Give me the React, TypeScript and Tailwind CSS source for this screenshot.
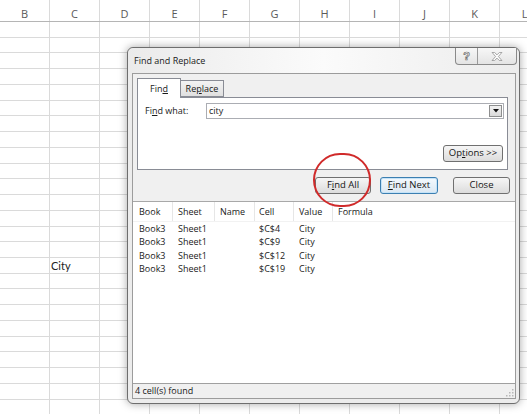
import React from 'react';

const COLS = ['B', 'C', 'D', 'E', 'F', 'G', 'H', 'I', 'J', 'K', 'L'];
const ROWS = Array.from({ length: 25 }, (_, i) => i);

const results = [
  { book: 'Book3', sheet: 'Sheet1', name: '', cell: '$C$4', value: 'City' },
  { book: 'Book3', sheet: 'Sheet1', name: '', cell: '$C$9', value: 'City' },
  { book: 'Book3', sheet: 'Sheet1', name: '', cell: '$C$12', value: 'City' },
  { book: 'Book3', sheet: 'Sheet1', name: '', cell: '$C$19', value: 'City' },
];

const listCols = [
  { key: 'book', label: 'Book', w: 'w-[40px] pl-[6px] border-r' },
  { key: 'sheet', label: 'Sheet', w: 'w-[42px] pl-[5px] border-r' },
  { key: 'name', label: 'Name', w: 'w-[40px] pl-[5px] border-r' },
  { key: 'cell', label: 'Cell', w: 'w-[39px] pl-[4px] border-r' },
  { key: 'value', label: 'Value', w: 'w-[39px] pl-[5px] border-r' },
  { key: 'formula', label: 'Formula', w: 'w-[60px] pl-[5px]' },
];

const btn =
  'h-[17px] rounded-[3px] border border-[#707070] bg-gradient-to-b from-[#f6f6f6] to-[#dcdcdc] text-[9.5px] text-[#151515] flex items-center justify-center';

function U({ children }: { children: React.ReactNode }) {
  return <span className="underline underline-offset-[1px] decoration-[0.5px]">{children}</span>;
}

export default function App() {
  return (
    <div className="relative w-[527px] h-[414px] overflow-hidden bg-white">
      {/* Sheet grid */}
      <div className="flex flex-col font-['Open_Sans',sans-serif]">
        <div className="flex h-[22px] border-b border-[#b5b5b5]">
          {COLS.map((c) => (
            <div
              key={c}
              className="w-[50px] shrink-0 border-r border-[#dadada] flex items-center justify-center pt-[5px] text-[11px] leading-none text-[#5a5a5a]"
            >
              {c}
            </div>
          ))}
        </div>
        {ROWS.map((r) => (
          <div key={r} className="flex h-[15.74px] shrink-0">
            {COLS.map((c, ci) => (
              <div
                key={c}
                className="w-[50px] shrink-0 border-r border-b border-[#dadada] flex items-center pl-[1px] text-[11px] leading-none text-[#222] font-['Lato',sans-serif]"
              >
                {r === 15 && ci === 1 ? 'City' : ''}
              </div>
            ))}
          </div>
        ))}
      </div>

      {/* Find and Replace dialog */}
      <div className="absolute left-[127px] top-[47px] w-[393px] h-[357px] rounded-[6px] border border-[#6e6e6e] bg-[#ececec] shadow-[0_0_8px_rgba(0,0,0,0.35)] flex flex-col font-['Open_Sans',sans-serif] text-[#1a1a1a]">
        {/* Title bar */}
        <div className="relative h-[25px] shrink-0 flex items-center pl-[6px] rounded-t-[6px] bg-gradient-to-r from-[#ebebeb] via-[#fbfbfb] to-[#ececec]">
          <span className="text-[9px]">Find and Replace</span>
          <div className="absolute right-[2px] top-0 flex h-[17px] rounded-b-[4px] border border-t-0 border-[#8a8a8a] bg-gradient-to-b from-[#f7f7f7] to-[#e4e4e4] overflow-hidden">
            <div className="w-[22px] border-r border-[#9a9a9a] flex items-center justify-center text-[11px] font-bold leading-none text-white font-['Liberation_Sans',sans-serif] [-webkit-text-stroke:0.7px_#6a6a6a]">
              ?
            </div>
            <div className="w-[38px] flex items-center justify-center">
              <svg width="12" height="9" viewBox="0 0 14 11">
                <polygon
                  points="1,0.5 4,0.5 7,3.5 10,0.5 13,0.5 8.7,5.5 13,10.5 10,10.5 7,7.5 4,10.5 1,10.5 5.3,5.5"
                  fill="#fff"
                  stroke="#7a7a7a"
                  strokeWidth="0.8"
                />
              </svg>
            </div>
          </div>
        </div>

        {/* Client area */}
        <div className="flex-1 ml-[4px] mr-[3px] mb-[4px] border border-[#9c9c9c] bg-[#f0f0f0] flex flex-col">
          {/* Tabs */}
          <div className="pt-[4px] pl-[4px] pr-[7px]">
            <div className="flex h-[19px] items-end relative z-10">
              <div className="w-[44px] h-[20px] -mb-px bg-white border border-b-0 border-[#898c95] flex items-center justify-center text-[9px]">
                Fin<U>d</U>
              </div>
              <div className="w-[43px] h-[17px] bg-gradient-to-b from-[#f3f3f3] to-[#e0e0e0] border border-l-0 border-[#898c95] flex items-center justify-center text-[9px]">
                Re<U>p</U>lace
              </div>
            </div>
            <div className="h-[73px] bg-white border border-[#898c95] flex flex-col">
              <div className="flex items-center pt-[5px] pl-[7px] pr-[3px]">
                <span className="w-[61px] text-[9px]">
                  Fi<U>n</U>d what:
                </span>
                <div className="flex-1 h-[16px] border border-[#abadb3] bg-white flex items-center pl-[2px] pr-[1px]">
                  <span className="flex-1 text-[9px]">city</span>
                  <div className="w-[13px] h-[12px] border border-[#8e8f8f] bg-gradient-to-b from-[#f2f2f2] to-[#dadada] flex items-center justify-center">
                    <svg width="6" height="4" viewBox="0 0 6 4">
                      <polygon points="0,0 6,0 3,3.5" fill="#111" />
                    </svg>
                  </div>
                </div>
              </div>
              <div className="flex-1 flex items-end justify-end pr-[4px] pb-[7px]">
                <div className={`${btn} w-[60px]`}>
                  Op<U>t</U>ions &gt;&gt;
                </div>
              </div>
            </div>
          </div>

          {/* Action buttons */}
          <div className="mt-[7px] flex justify-end pr-[5px]">
            <div className={`${btn} w-[56px]`}>
              F<U>i</U>nd All
            </div>
            <div className="ml-[9px] w-[58px] h-[17px] rounded-[3px] border border-[#3c7fb1] bg-gradient-to-b from-[#f4f9fd] to-[#dbe8f3] shadow-[inset_0_0_0_1px_#c4e3f8] text-[9.5px] text-[#151515] flex items-center justify-center">
              <U>F</U>ind Next
            </div>
            <div className={`${btn} ml-[15px] w-[57px]`}>Close</div>
          </div>

          {/* Results list */}
          <div className="mt-[7px] h-[182px] border-t border-[#a8a8a8] bg-white flex flex-col">
            <div className="flex h-[20px] shrink-0 border-b border-[#f2f2f2]">
              {listCols.map((c) => (
                <div
                  key={c.key}
                  className={`${c.w} shrink-0 border-[#e6e6e6] flex items-center text-[9px]`}
                >
                  {c.label}
                </div>
              ))}
            </div>
            {results.map((r, i) => (
              <div key={i} className="flex h-[13.33px] shrink-0">
                {listCols.map((c) => (
                  <div key={c.key} className={`${c.w} border-transparent shrink-0 flex items-center text-[9px] leading-none`}>
                    {(r as Record<string, string>)[c.key] || ''}
                  </div>
                ))}
              </div>
            ))}
          </div>

          {/* Status bar */}
          <div className="relative h-[15px] border-t border-[#a0a0a0] bg-[#f0f0f0] flex items-center pl-[2px] text-[9px]">
            4 cell(s) found
            <svg className="absolute right-[1px] bottom-[1px]" width="9" height="9" viewBox="0 0 9 9">
              {[
                [7, 1],
                [7, 4],
                [4, 4],
                [7, 7],
                [4, 7],
                [1, 7],
              ].map(([x, y], i) => (
                <rect key={i} x={x} y={y} width="1.5" height="1.5" fill="#b8b8b8" />
              ))}
            </svg>
          </div>
        </div>
      </div>

      {/* Red highlight circle */}
      <div className="absolute left-[313px] top-[153px] w-[58px] h-[54px] rounded-full border-2 border-[#d02a2a]" />
    </div>
  );
}
